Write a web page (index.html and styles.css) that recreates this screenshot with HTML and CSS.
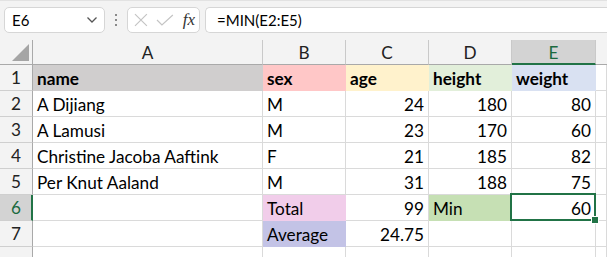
FILE: index.html
```html
<!DOCTYPE html>
<html>
<head>
<meta charset="utf-8">
<link rel="stylesheet" href="styles.css">
</head>
<body>
<div class="toolbar">
  <div class="namebox">
    <span class="nb-text">E6</span>
    <svg class="chev" width="12" height="8" viewBox="0 0 12 8"><path d="M1.5 1.5 L6 6 L10.5 1.5" fill="none" stroke="#555" stroke-width="1.3"/></svg>
  </div>
  <div class="dots"><i></i><i></i><i></i></div>
  <div class="fxbox">
    <svg width="16" height="14" viewBox="0 0 16 14"><path d="M2 1 L14 13 M14 1 L2 13" stroke="#c4c4c4" stroke-width="1.2" fill="none"/></svg>
    <svg width="18" height="12" viewBox="0 0 18 12"><path d="M1 6 L6 11 L17 1" stroke="#c4c4c4" stroke-width="1.2" fill="none"/></svg>
    <span class="fx">fx</span>
  </div>
  <div class="formula">=MIN(E2:E5)</div>
</div>
<div class="sheet">
  <div class="corner"><span class="tri"></span></div>
  <div class="ch">A</div>
  <div class="ch">B</div>
  <div class="ch">C</div>
  <div class="ch">D</div>
  <div class="ch sel">E</div>
  <div class="ch blank"></div>

  <div class="rh">1</div>
  <div class="c b f-grey">name</div>
  <div class="c b f-pink">sex</div>
  <div class="c b f-yellow">age</div>
  <div class="c b f-green">height</div>
  <div class="c b f-blue">weight</div>
  <div class="c"></div>

  <div class="rh">2</div>
  <div class="c">A Dijiang</div>
  <div class="c">M</div>
  <div class="c n">24</div>
  <div class="c n">180</div>
  <div class="c n">80</div>
  <div class="c"></div>

  <div class="rh">3</div>
  <div class="c">A Lamusi</div>
  <div class="c">M</div>
  <div class="c n">23</div>
  <div class="c n">170</div>
  <div class="c n">60</div>
  <div class="c"></div>

  <div class="rh">4</div>
  <div class="c">Christine Jacoba Aaftink</div>
  <div class="c">F</div>
  <div class="c n">21</div>
  <div class="c n">185</div>
  <div class="c n">82</div>
  <div class="c"></div>

  <div class="rh">5</div>
  <div class="c">Per Knut Aaland</div>
  <div class="c">M</div>
  <div class="c n">31</div>
  <div class="c n">188</div>
  <div class="c n">75</div>
  <div class="c"></div>

  <div class="rh sel">6</div>
  <div class="c"></div>
  <div class="c f-total">Total</div>
  <div class="c n">99</div>
  <div class="c f-min">Min</div>
  <div class="c n active">60<span class="handle"></span></div>
  <div class="c"></div>

  <div class="rh">7</div>
  <div class="c"></div>
  <div class="c f-avg">Average</div>
  <div class="c n">24.75</div>
  <div class="c"></div>
  <div class="c"></div>
  <div class="c"></div>

  <div class="rh last"></div>
  <div class="c"></div>
  <div class="c"></div>
  <div class="c"></div>
  <div class="c"></div>
  <div class="c"></div>
  <div class="c"></div>
</div>
</body>
</html>
```
FILE: styles.css
```css
* { box-sizing: border-box; }
html, body { margin: 0; padding: 0; }
body {
  width: 607px;
  height: 257px;
  overflow: hidden;
  background: #f3f3f3;
  font-family: Lato, "Liberation Sans", sans-serif;
  color: #000;
}
.toolbar {
  height: 40px;
  display: flex;
  align-items: flex-start;
  padding-top: 7px;
  padding-left: 4px;
  border-top: 1px solid #e2e2e2;
}
.namebox {
  width: 101px;
  height: 26px;
  margin-top: -1px;
  background: #fff;
  border: 1px solid #d6d6d6;
  border-radius: 5px;
  display: flex;
  align-items: center;
  justify-content: space-between;
  padding: 0 6px 0 7px;
  font-size: 15px;
}
.dots {
  width: 22px;
  height: 26px;
  margin-top: -1px;
  display: flex;
  flex-direction: column;
  align-items: center;
  justify-content: center;
  gap: 3px;
}
.dots i {
  display: block;
  width: 2px;
  height: 2px;
  background: #8a8a8a;
}
.fxbox {
  width: 73px;
  height: 26px;
  margin-top: -1px;
  background: #fff;
  border: 1px solid #d6d6d6;
  border-radius: 5px;
  display: flex;
  align-items: center;
  padding: 0 4px 0 5px;
  gap: 7px;
}
.fx {
  font-family: "Liberation Serif", serif;
  font-style: italic;
  font-size: 17px;
  color: #333;
  margin-left: 2px;
}
.formula {
  flex: 1;
  height: 26px;
  margin-top: -1px;
  margin-left: 5px;
  background: #fff;
  border: 1px solid #d6d6d6;
  border-right: none;
  border-radius: 5px 0 0 5px;
  display: flex;
  align-items: center;
  padding-left: 11px;
  font-size: 15px;
}
.sheet {
  display: grid;
  grid-template-columns: 33px 230px 83px 83px 83px 84px 1fr;
  grid-template-rows: 25px repeat(8, 26px);
  background: #fff;
  font-size: 17.2px;
}
.corner {
  background: #f3f3f3;
  border-right: 1px solid #a9a9a9;
  border-bottom: 1px solid #a9a9a9;
  position: relative;
}
.tri {
  position: absolute;
  right: 3px;
  bottom: 3px;
  width: 0;
  height: 0;
  border-left: 17px solid transparent;
  border-bottom: 17px solid #a5a5a5;
}
.ch {
  background: #f3f3f3;
  border-right: 1px solid #c9c9c9;
  border-bottom: 1px solid #a9a9a9;
  display: flex;
  align-items: center;
  justify-content: center;
  color: #222;
  padding-top: 1px;
}
.ch.blank { border-right: none; }
.ch.sel {
  background: #d3d3d3;
  color: #1b6a3f;
  border-bottom: 2px solid #217346;
  padding-top: 2px;
}
.rh {
  background: #f3f3f3;
  border-right: 1px solid #a9a9a9;
  border-bottom: 1px solid #cfcfcf;
  display: flex;
  align-items: center;
  justify-content: center;
  color: #222;
}
.rh.sel {
  background: #d3d3d3;
  color: #1b6a3f;
  border-right: 2px solid #217346;
  padding-left: 1px;
}
.c {
  border-right: 1px solid #dadada;
  border-bottom: 1px solid #dadada;
  display: flex;
  align-items: center;
  padding: 1px 4px 0 4px;
  white-space: nowrap;
  position: relative;
}
.c.n { justify-content: flex-end; }
.c.b { font-weight: bold; }
.f-grey { background: #d0cece; border-color: transparent; }
.f-pink { background: #ffc7c7; border-color: transparent; }
.f-yellow { background: #fff2cc; border-color: transparent; }
.f-green { background: #e2efda; border-color: transparent; }
.f-blue { background: #d9e1f2; border-color: transparent; }
.f-total { background: #f1cdea; border-color: transparent; }
.f-avg { background: #c3c3e6; border-color: transparent; }
.f-min { background: #c6e0b4; border-color: transparent; }
.active::before {
  content: "";
  position: absolute;
  left: -2px;
  top: -2px;
  right: -1px;
  bottom: -1px;
  border: 2px solid #217346;
}
.handle {
  position: absolute;
  right: -4px;
  bottom: -4px;
  width: 6px;
  height: 6px;
  background: #217346;
  border: 1px solid #fff;
  box-sizing: content-box;
  z-index: 2;
}
```
